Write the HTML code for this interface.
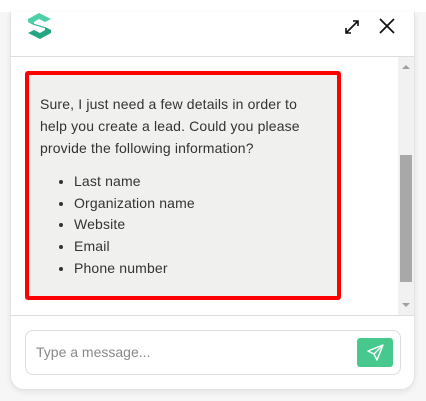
<!DOCTYPE html>
<html><head><style>
body{margin:0;width:426px;height:401px;background:#f6f6f6;position:relative;overflow:hidden;font-family:"Liberation Sans",sans-serif}
.top{position:absolute;left:0;top:0;width:426px;height:12px;background:#fff}
.panel{position:absolute;left:10px;top:12px;width:405px;height:378px;background:#fff;border-radius:0 0 14px 14px;box-shadow:0 2px 6px rgba(0,0,0,.08);border:1px solid #e4e4e4;border-top:none;box-sizing:border-box}
.hdr{position:absolute;left:0;top:0;width:100%;height:44px;border-bottom:1px solid #ddd}
.msgs{position:absolute;left:0;top:45px;width:100%;height:258px;border-bottom:1px solid #ddd}
.sb{position:absolute;right:0;top:0;width:16px;height:100%;background:#f1f1f1}
.thumb{position:absolute;left:2px;right:2px;top:98px;height:127px;background:#a8a8a8}
.bubble{position:absolute;left:14px;top:14px;width:316px;height:229px;box-sizing:border-box;border:4px solid #ff0000;border-radius:3px;background:#f0f0ee;padding:18px 22px 0 11px;font-size:14px;color:#333;line-height:22px;letter-spacing:0.15px}
ul{margin:12px 0 0;padding-left:34px;line-height:21.7px}
.inp{position:absolute;left:14px;top:318px;width:376px;height:45px;border:1px solid #ddd;border-radius:8px;box-sizing:border-box}
.ph{position:absolute;left:10px;top:13px;font-size:14px;color:#888}
.send{position:absolute;left:331px;top:7px;width:36px;height:29px;background:#47c98e;border-radius:3px}
</style></head><body>
<div class="top"></div>
<div class="panel">
 <div class="hdr">
  <svg style="position:absolute;left:17px;top:1px" width="23" height="26" viewBox="0 0 23 26">
   <path d="M0 6 L11 0 L23 6 L17 9 L11 6 L6 9 L6 12 L0 9 Z" fill="#4ecfa8"/>
   <path d="M0 9 L17 14 L23 17 L6 12 Z" fill="#34b592"/>
   <path d="M23 17 L23 20 L12 26 L0 20 L6 17 L12 20 L17 17 L17 14 Z" fill="#26a584"/>
  </svg>
  <svg style="position:absolute;left:332px;top:6px" width="18" height="18" viewBox="0 0 18 18" stroke="#111" stroke-width="1.6" fill="none"><path d="M3 15 L15 3 M10 3 H15 V8 M3 10 V15 H8"/></svg>
  <svg style="position:absolute;left:367px;top:5px" width="18" height="18" viewBox="0 0 18 18" stroke="#111" stroke-width="1.7"><path d="M2 2 L16 16 M16 2 L2 16"/></svg>
 </div>
 <div class="msgs">
  <div class="sb"><div style="position:absolute;left:4px;top:8px;border:4px solid transparent;border-bottom:4px solid #a0a0a0;border-top:none"></div><div class="thumb"></div><div style="position:absolute;left:4px;bottom:8px;border:4px solid transparent;border-top:4px solid #a0a0a0;border-bottom:none"></div></div>
  <div class="bubble">Sure, I just need a few details in order to help you create a lead. Could you please provide the following information?
   <ul><li>Last name</li><li>Organization name</li><li>Website</li><li>Email</li><li>Phone number</li></ul>
  </div>
 </div>
 <div class="inp"><div class="ph">Type a message...</div>
  <div class="send"><svg style="position:absolute;left:10px;top:6px" width="17" height="17" viewBox="0 0 17 17" fill="none" stroke="#fff" stroke-width="1.4" stroke-linejoin="round"><path d="M16 1 L1 7 L7 10 L10 16 Z M16 1 L7 10"/></svg></div>
 </div>
</div>
</body></html>
